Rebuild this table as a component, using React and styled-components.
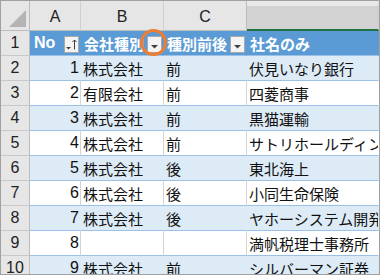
import React from "react";
import styled, { createGlobalStyle } from "styled-components";

const GlobalStyle = createGlobalStyle`
  body {
    margin: 0;
    background: #ffffff;
    font-family: "Liberation Sans", "Noto Sans CJK JP", sans-serif;
  }
`;

const Sheet = styled.div`
  width: 380px;
  height: 275px;
  box-sizing: border-box;
  border: 1px solid #a0a0a0;
  overflow: hidden;
  display: grid;
  grid-template-columns: 29px 51px 83px 83px 132px;
  grid-template-rows: 30px;
  grid-auto-rows: 25px;
`;

const Corner = styled.div`
  position: relative;
  box-sizing: border-box;
  background: #e6e6e6;
  border-right: 1px solid #bcbcbc;
  border-bottom: 1px solid #bcbcbc;
  &::after {
    content: "";
    position: absolute;
    right: 3px;
    bottom: 3px;
    width: 17px;
    height: 17px;
    background: #b4b4b4;
    clip-path: polygon(100% 0, 100% 100%, 0 100%);
  }
`;

const ColHead = styled.div`
  box-sizing: border-box;
  display: flex;
  align-items: center;
  justify-content: center;
  background: ${(p) => (p.$selected ? "#d2d2d2" : "#e6e6e6")};
  border-top: ${(p) => (p.$selected ? "5px solid #e8e8e8" : "none")};
  border-right: 1px solid ${(p) => (p.$edge ? "#bcbcbc" : "#d0d0d0")};
  border-bottom: ${(p) => (p.$selected ? "2px solid #217346" : "1px solid #bcbcbc")};
  font-size: 16px;
  color: #222;
  padding-top: ${(p) => (p.$selected ? "0" : "3px")};
`;

const RowHead = styled.div`
  box-sizing: border-box;
  display: flex;
  align-items: center;
  justify-content: center;
  background: #e6e6e6;
  border-right: 1px solid #bcbcbc;
  border-bottom: 1px solid #c8c8c8;
  font-size: 16px;
  color: #222;
`;

const bg = (p) => (p.$head ? "#5b9bd5" : p.$band ? "#ddebf7" : "#ffffff");

const Cell = styled.div`
  position: relative;
  box-sizing: border-box;
  display: flex;
  align-items: center;
  justify-content: ${(p) => (p.$right ? "flex-end" : "flex-start")};
  padding: ${(p) => (p.$right ? "0 1px 0 0" : "0 0 0 2px")};
  background: ${bg};
  border-bottom: 1px solid #9bc2e6;
  border-right: 1px solid ${(p) => (p.$last ? "transparent" : p.$head || p.$band ? bg(p) : "#d4d4d4")};
  font-size: ${(p) => (p.$right ? "16px" : "15px")};
  color: ${(p) => (p.$head ? "#ffffff" : "#111")};
  font-weight: ${(p) => (p.$head ? "bold" : "normal")};
  white-space: nowrap;
  overflow: ${(p) => (p.$head ? "visible" : "hidden")};
`;

const HeadLabel = styled.span`
  flex: 1;
  padding-left: ${(p) => (p.$wide ? "2px" : "1px")};
  font-size: ${(p) => (p.$wide ? "16px" : "15px")};
  overflow: hidden;
`;

const FilterBtn = styled.span`
  box-sizing: border-box;
  width: 15px;
  height: 17px;
  margin: 0 1px 0 0;
  align-self: flex-end;
  margin-bottom: 2px;
  border: 1px solid #a8a8a8;
  background: #f4f4f4;
  display: flex;
  align-items: center;
  justify-content: center;
  flex-shrink: 0;
`;

const Ring = styled.span`
  position: absolute;
  left: 59px;
  top: -2px;
  width: 27px;
  height: 27px;
  box-sizing: border-box;
  border: 3px solid #ed7d31;
  border-radius: 50%;
  z-index: 2;
`;

const DropIcon = () => (
  <svg width="13" height="15" viewBox="0 0 13 15">
    <polygon points="3,8 10,8 6.5,11.5" fill="#404040" />
  </svg>
);

const SortIcon = () => (
  <svg width="13" height="15" viewBox="0 0 13 15">
    <polygon points="1,10 6,10 3.5,12.5" fill="#404040" />
    <line x1="9.5" y1="3" x2="9.5" y2="12.5" stroke="#404040" strokeWidth="1" />
    <polyline points="7.5,5 9.5,3 11.5,5" fill="none" stroke="#404040" strokeWidth="1" />
  </svg>
);

const rows = [
  [1, "株式会社", "前", "伏見いなり銀行"],
  [2, "有限会社", "前", "四菱商事"],
  [3, "株式会社", "前", "黒猫運輸"],
  [4, "株式会社", "前", "サトリホールディングス"],
  [5, "株式会社", "後", "東北海上"],
  [6, "株式会社", "後", "小同生命保険"],
  [7, "株式会社", "後", "ヤホーシステム開発"],
  [8, "", "", "満帆税理士事務所"],
  [9, "株式会社", "前", "シルバーマン証券"],
];

const App = () => (
  <>
    <GlobalStyle />
    <Sheet>
      <Corner />
      <ColHead>A</ColHead>
      <ColHead>B</ColHead>
      <ColHead $edge>C</ColHead>
      <ColHead $selected />

      <RowHead>1</RowHead>
      <Cell $head>
        <HeadLabel $wide>No</HeadLabel>
        <FilterBtn>
          <SortIcon />
        </FilterBtn>
      </Cell>
      <Cell $head>
        <HeadLabel>会社種別</HeadLabel>
        <FilterBtn>
          <DropIcon />
        </FilterBtn>
        <Ring />
      </Cell>
      <Cell $head>
        <HeadLabel>種別前後</HeadLabel>
        <FilterBtn>
          <DropIcon />
        </FilterBtn>
      </Cell>
      <Cell $head $last>
        <HeadLabel>社名のみ</HeadLabel>
      </Cell>

      {rows.map((r, i) => {
        const band = i % 2 === 0;
        return (
          <React.Fragment key={r[0]}>
            <RowHead>{i + 2}</RowHead>
            <Cell $band={band} $right>
              {r[0]}
            </Cell>
            <Cell $band={band}>{r[1]}</Cell>
            <Cell $band={band}>{r[2]}</Cell>
            <Cell $band={band} $last>
              {r[3]}
            </Cell>
          </React.Fragment>
        );
      })}
    </Sheet>
  </>
);

export default App;
